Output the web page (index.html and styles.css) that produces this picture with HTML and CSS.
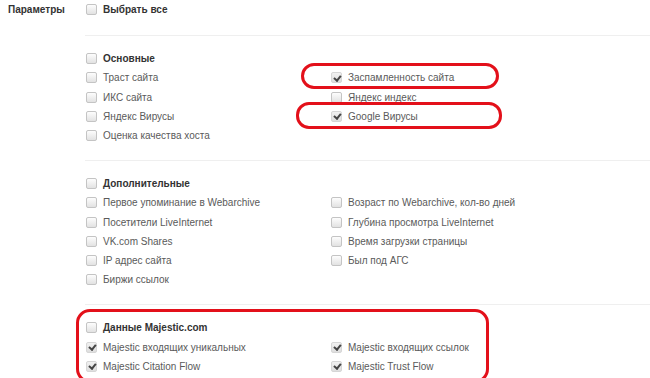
FILE: index.html
```html
<!DOCTYPE html>
<html lang="ru">
<head>
    <meta charset="UTF-8">
    <title>Параметры</title>
    <link rel="stylesheet" href="styles.css">
</head>
<body>
    <div class="form-row">
        <div class="form-label">Параметры</div>
        <div class="form-body">

            <div class="section first">
                <div class="check heading"><span class="box"></span>Выбрать все</div>
            </div>

            <div class="section">
                <div class="cols">
                    <div class="col">
                        <div class="check heading"><span class="box"></span>Основные</div>
                        <div class="check"><span class="box"></span>Траст сайта</div>
                        <div class="check"><span class="box"></span>ИКС сайта</div>
                        <div class="check"><span class="box"></span>Яндекс Вирусы</div>
                        <div class="check"><span class="box"></span>Оценка качества хоста</div>
                    </div>
                    <div class="col offset">
                        <div class="check mark mark-spam"><span class="box checked"></span>Заспамленность сайта</div>
                        <div class="check"><span class="box"></span>Яндекс индекс</div>
                        <div class="check mark mark-google"><span class="box checked"></span>Google Вирусы</div>
                    </div>
                </div>
            </div>

            <div class="section">
                <div class="cols">
                    <div class="col">
                        <div class="check heading"><span class="box"></span>Дополнительные</div>
                        <div class="check"><span class="box"></span>Первое упоминание в Webarchive</div>
                        <div class="check"><span class="box"></span>Посетители LiveInternet</div>
                        <div class="check"><span class="box"></span>VK.com Shares</div>
                        <div class="check"><span class="box"></span>IP адрес сайта</div>
                        <div class="check"><span class="box"></span>Биржи ссылок</div>
                    </div>
                    <div class="col offset">
                        <div class="check"><span class="box"></span>Возраст по Webarchive, кол-во дней</div>
                        <div class="check"><span class="box"></span>Глубина просмотра LiveInternet</div>
                        <div class="check"><span class="box"></span>Время загрузки страницы</div>
                        <div class="check"><span class="box"></span>Был под АГС</div>
                    </div>
                </div>
            </div>

            <div class="section last majestic">
                <div class="cols">
                    <div class="col">
                        <div class="check heading"><span class="box"></span>Данные Majestic.com</div>
                        <div class="check"><span class="box checked"></span>Majestic входящих уникальных</div>
                        <div class="check"><span class="box checked"></span>Majestic Citation Flow</div>
                    </div>
                    <div class="col offset">
                        <div class="check"><span class="box checked"></span>Majestic входящих ссылок</div>
                        <div class="check"><span class="box checked"></span>Majestic Trust Flow</div>
                    </div>
                </div>
            </div>

        </div>
    </div>
</body>
</html>
```

FILE: styles.css
```css
body {
    margin: 0;
    background: #fff;
    font-family: "Liberation Sans", Arial, sans-serif;
    font-size: 10px;
    color: #5a5a5a;
    overflow: hidden;
}
.form-row {
    display: flex;
}
.form-label {
    width: 77px;
    padding-left: 8px;
    padding-top: 4px;
    color: #333;
    font-weight: bold;
    font-size: 10px;
}
.form-body {
    flex: 1;
}
.section {
    padding: 13px 0 14.5px;
    border-bottom: 1px solid #efefef;
}
.section.first {
    padding-top: 0;
    padding-bottom: 15.5px;
}
.section.last {
    border-bottom: none;
}
.cols {
    display: flex;
}
.col {
    width: 245px;
}
.col.offset {
    padding-top: 19.3px;
}
.check {
    height: 19.3px;
    display: flex;
    align-items: center;
    white-space: nowrap;
}
.check.heading {
    font-weight: bold;
    color: #333;
}
.box {
    width: 9px;
    height: 9px;
    border: 1px solid #c4c4c4;
    border-radius: 2px;
    background: linear-gradient(#fdfdfd, #e2e2e2);
    margin-right: 6px;
    margin-left: 1px;
    flex-shrink: 0;
    position: relative;
}
.box.checked {
    border-color: #d6d6d6;
    background: linear-gradient(#f1f1f1, #dedede);
}
.box.checked::after {
    content: "";
    position: absolute;
    left: 3px;
    top: 0.5px;
    width: 2.5px;
    height: 5px;
    border: solid #444;
    border-width: 0 2px 2px 0;
    transform: rotate(40deg);
}

/* red marker outlines drawn over the form */
.mark {
    position: relative;
}
.mark::before,
.majestic::before {
    content: "";
    position: absolute;
    border: 3px solid #e3101a;
    box-sizing: border-box;
    pointer-events: none;
}
.mark-spam::before {
    left: -29px;
    top: -5px;
    width: 198px;
    height: 26px;
    border-radius: 13px;
}
.mark-google::before {
    left: -34px;
    top: -5px;
    width: 206px;
    height: 27px;
    border-radius: 13px;
}
.majestic {
    position: relative;
}
.majestic::before {
    left: -9px;
    top: 4px;
    width: 413px;
    height: 74px;
    border-radius: 14px;
}
```
